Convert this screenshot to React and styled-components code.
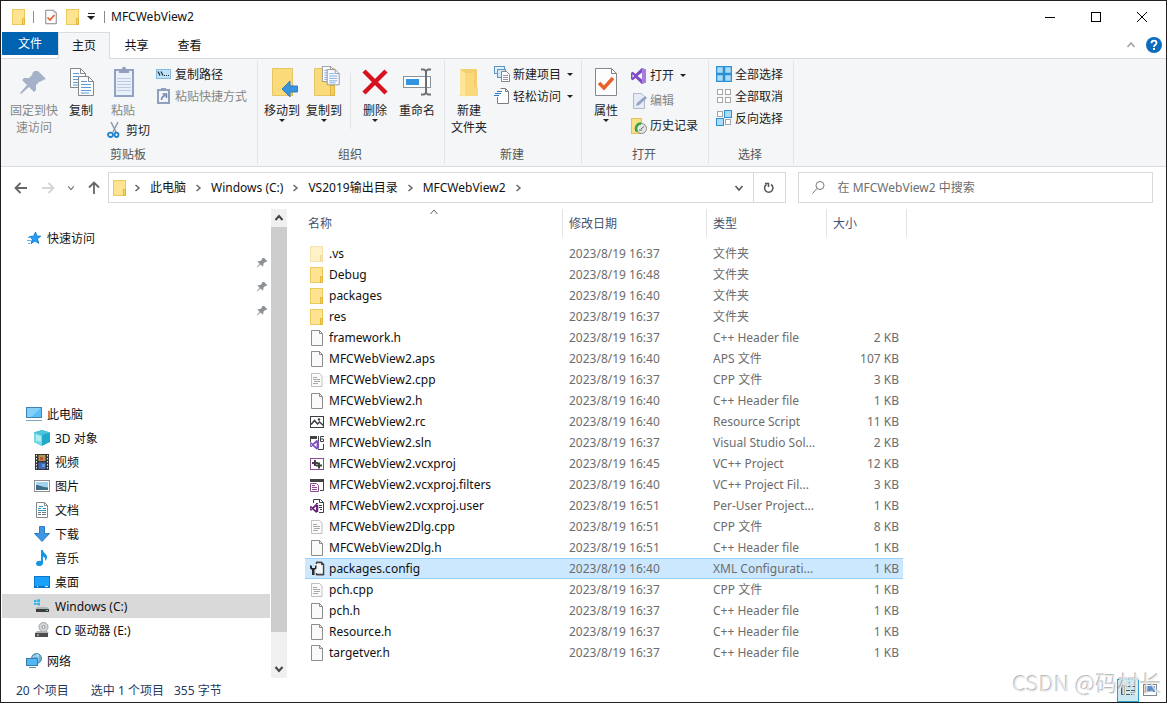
import React from "react";
import styled, { createGlobalStyle } from "styled-components";

const GlobalStyle = createGlobalStyle`
  * {
    box-sizing: border-box;
  }

  body {
    margin: 0;
    background: #fff;
    font-family: "Noto Sans", "Noto Sans CJK SC", sans-serif;
    font-size: 12px;
    line-height: 17px;
    color: #111;
  }

  button,
  input {
    margin: 0;
    padding: 0;
    border: 0;
    background: none;
    font: inherit;
    color: inherit;
  }

  ul {
    margin: 0;
    padding: 0;
    list-style: none;
  }
`;

const Window = styled.div`
  position: relative;
  display: flex;
  flex-direction: column;
  min-height: 100vh;
  border: 1px solid #231f20;
`;

const Icon = styled.svg`
  display: block;
  flex: none;
  width: ${(props) => props.$size || 16}px;
  height: ${(props) => props.$size || 16}px;
`;

/* ---------- icons ---------- */

function FolderIcon({ faded }) {
  return (
    <Icon viewBox="0 0 16 16" opacity={faded ? 0.5 : 1}>
      <rect x="1.5" y=".5" width="12" height="15" fill="#fee491" stroke="#ecc95e" />
      <path d="M11.5 15.5V9.5h2v6z" fill="#fbd65e" stroke="#dfb53c" />
    </Icon>
  );
}

function FileIcon() {
  return (
    <Icon viewBox="0 0 16 16">
      <path d="M2.5 .5h8l3 3v12h-11z" fill="#fafafa" stroke="#8d8d8d" />
      <path d="M10.5 .5v3h3" fill="none" stroke="#8d8d8d" />
    </Icon>
  );
}

function CodeIcon() {
  return (
    <Icon viewBox="0 0 16 16">
      <path d="M2.5 1.5h8l2.5 2.5v10.5H2.5z" fill="#fbfbfb" stroke="#c0c0c0" />
      <path d="M4 5.5h4M4 7.5h7M5 9.5h6M4 11.5h5" stroke="#a8a8a8" />
    </Icon>
  );
}

function ResourceIcon() {
  return (
    <Icon viewBox="0 0 16 16">
      <rect x="1.5" y="2.5" width="13" height="11" fill="#fff" stroke="#3e3e42" />
      <path d="M2 10.5l3.5-4 3 3.5 2-2 4 3.5" fill="none" stroke="#3e3e42" strokeWidth="1.5" />
      <circle cx="10" cy="5.5" r="1.2" fill="#3e3e42" />
    </Icon>
  );
}

function VsMark(props) {
  return (
    <g {...props}>
      <path
        fillRule="evenodd"
        d="M10.8 0L4.6 6 1.8 3.8 0 4.7v6.6l1.8.9L4.6 10l6.2 6L15 14.2V1.8zM11 4.5v7L6.5 8zM1.5 6.2L3.3 8 1.5 9.8z"
      />
    </g>
  );
}

function SolutionIcon() {
  return (
    <Icon viewBox="0 0 16 16">
      <path d="M1.5 7V1.5h6M14.5 9v5.5H9" fill="none" stroke="#424242" />
      <path d="M1 1h7v3H1z" fill="#424242" />
      <path d="M9.5 1v6M15 1.5h-3.5v5h3v-2.5h-3" fill="none" stroke="#424242" />
      <VsMark fill="#8052bc" transform="translate(1 5) scale(.6)" />
    </Icon>
  );
}

function ProjectIcon() {
  return (
    <Icon viewBox="0 0 16 16">
      <rect x="1.5" y="2.5" width="13" height="11" fill="#fff" stroke="#8d4b91" />
      <path d="M6 4v6M3 7h6M10 6.500v6M7 9.500h6" stroke="#424242" strokeWidth="2" />
    </Icon>
  );
}

function FiltersIcon() {
  return (
    <Icon viewBox="0 0 16 16">
      <path d="M1.5 4V2.500h13v11H11" fill="none" stroke="#424242" />
      <path d="M1 2h14v3H1z" fill="#424242" />
      <path d="M1.5 6.500h6l2 2v6h-8z" fill="#fff" stroke="#8d4b91" />
      <path d="M3 8.500h3M3 10.500h5M3 12.500h5" stroke="#8d4b91" />
    </Icon>
  );
}

function UserIcon() {
  return (
    <Icon viewBox="0 0 16 16">
      <path d="M4.5 5V1.500h7l3 3v10H10" fill="none" stroke="#424242" />
      <path d="M10.5 1.500v3h4" fill="none" stroke="#424242" />
      <path d="M7 5.500h2M10 7.500h3M10 9.500h3M11 11.500h2" stroke="#424242" />
      <VsMark fill="#68217a" transform="translate(1 6) scale(.55)" />
    </Icon>
  );
}

function ConfigIcon() {
  return (
    <Icon viewBox="0 0 16 16">
      <path d="M7.5 1.500h5l2 2v10h-7" fill="none" stroke="#424242" strokeWidth="1.300" />
      <path d="M7.5 1.500h5l2 2v10h-7z" fill="#f6f6f6" />
      <path d="M7.5 3V1.500h5l2 2v10h-7V12" fill="none" stroke="#424242" strokeWidth="1.300" />
      <path d="M12 1v3h3z" fill="#424242" />
      <path d="M1 4v3.500L3 9v5h2.500V9l2-1.500V4L6 5v2H3V5z" fill="#2c2c2c" />
    </Icon>
  );
}

function PinIcon({ size, color }) {
  return (
    <Icon $size={size} viewBox="0 0 32 32">
      <path
        d="M20 5l8 8-3 1-1 1-3 1-3 3 0 5-2 2-5-5-8 7-1-1 7-8-5-5 2-2 5 0 3-3 1-3 2-1z"
        fill={color}
      />
    </Icon>
  );
}

function PaperLines({ x, y }) {
  return (
    <g transform={`translate(${x} ${y})`}>
      <path d="M.5 .5h10l5 5v14H.5z" fill="#fbfcfe" stroke="#85878b" />
      <path d="M10.5 .5v5h5" fill="none" stroke="#85878b" />
      <path d="M3 5.500h6M3 8.500h10M3 11.500h10M3 14.500h10M3 17h8" stroke="#5e9ad8" />
    </g>
  );
}

function CopyIcon() {
  return (
    <Icon $size={32} viewBox="0 0 32 32">
      <PaperLines x={5} y={2} />
      <PaperLines x={13} y={10} />
    </Icon>
  );
}

function PasteIcon() {
  return (
    <Icon $size={32} viewBox="0 0 32 32">
      <rect x="8" y="4" width="18" height="26" fill="#eaf0fa" stroke="#8fa2c5" strokeWidth="2" />
      <path d="M10 12.500h14M10 15.500h14M10 18.500h14M10 21.500h14M10 24.500h14" stroke="#bccbe3" />
      <path d="M12 7V3h3c0-3 4-3 4 0h3v4z" fill="#93a0bb" />
    </Icon>
  );
}

function CutIcon() {
  return (
    <Icon viewBox="0 0 16 16">
      <path d="M4 0l5 10M11 0L6 10" stroke="#8d9aab" strokeWidth="1.500" />
      <ellipse cx="3.500" cy="12.800" rx="2.500" ry="2.200" fill="none" stroke="#1f7fc9" strokeWidth="1.800" />
      <ellipse cx="9.500" cy="12.800" rx="2" ry="2.200" fill="none" stroke="#1f7fc9" strokeWidth="1.800" />
    </Icon>
  );
}

function PathIcon() {
  return (
    <Icon viewBox="0 0 16 16">
      <rect x=".5" y="3.500" width="14" height="9" fill="#bfe2fb" stroke="#8ab9de" />
      <path d="M2 5.500l2 4M5 5.500l2 4M8 9.500h1M10 9.500h1M12 9.500h1" stroke="#1b2a3a" strokeWidth="1.200" />
    </Icon>
  );
}

function ShortcutIcon() {
  return (
    <Icon viewBox="0 0 16 16">
      <rect x="2" y="2" width="11" height="13" fill="#f3f5fa" stroke="#8fa0bd" strokeWidth="2" />
      <path d="M5 0h5v3H5z" fill="#8fa0bd" />
      <path d="M5.500 12c0-3 1-4 4-4.500M6.500 6h4v4" fill="none" stroke="#7486a8" strokeWidth="1.500" />
    </Icon>
  );
}

function BigFolder() {
  return (
    <>
      <path d="M6.500 2.500h20v27h-20z" fill="#fbdb79" stroke="#e6c566" />
      <path d="M22.500 29.500v-10h4v10z" fill="#f6cd59" stroke="#dcb447" />
    </>
  );
}

function MoveToIcon() {
  return (
    <Icon $size={32} viewBox="0 0 32 32">
      <BigFolder />
      <path d="M16 23l8-8v5h7.500v6H24v5z" fill="#3794dd" stroke="#2f7fc2" />
    </Icon>
  );
}

function CopyToIcon() {
  return (
    <Icon $size={32} viewBox="0 0 32 32">
      <BigFolder />
      <g transform="translate(14 0) scale(.8)">
        <PaperLines x={0} y={0} />
        <PaperLines x={6} y={4} />
      </g>
    </Icon>
  );
}

function DeleteIcon() {
  return (
    <Icon $size={32} viewBox="0 0 32 32">
      <path d="M5 5l22 22M27 5L5 27" stroke="#d8111f" strokeWidth="4.500" />
    </Icon>
  );
}

function RenameIcon() {
  return (
    <Icon $size={32} viewBox="0 0 32 32">
      <rect x="2.500" y="10.500" width="27" height="11" fill="#fff" stroke="#8b9299" />
      <rect x="5" y="13" width="13" height="6" fill="#3394e0" />
      <path d="M20 3.500h3l2 1.500 2-1.500h3M25 4.500v23M20 28.500h3l2-1.500 2 1.500h3" fill="none" stroke="#6b7076" strokeWidth="2" />
    </Icon>
  );
}

function NewFolderIcon() {
  return (
    <Icon $size={32} viewBox="0 0 32 32">
      <path d="M7 3h17v27H7z" fill="#f3cf70" />
      <path d="M7 3l5 4v24l-5-2z" fill="#fde59a" />
      <path d="M12 7h9v15l4-1v9H12z" fill="#fad97d" />
    </Icon>
  );
}

function NewItemIcon() {
  return (
    <Icon viewBox="0 0 16 16">
      <rect x=".5" y=".5" width="10" height="7" fill="#e1f1fc" stroke="#5c94bd" />
      <rect x="3.500" y="3.500" width="8" height="8" fill="#cfe8fa" stroke="#5c94bd" />
      <path d="M7.500 5.500h5l3 3v7h-8z" fill="#fff" stroke="#84878b" />
      <path d="M9 9.500h5M9 11.500h5M9 13.500h5" stroke="#9d8fa5" />
    </Icon>
  );
}

function EasyAccessIcon() {
  return (
    <Icon viewBox="0 0 16 16">
      <path d="M3.500 9v6.500h11V3.500l-3-3h-5" fill="#fff" stroke="#7b7d80" />
      <path d="M11.500 .5v3h3" fill="none" stroke="#7b7d80" />
      <path d="M3 3.500h5M1 5.500h6M0 7.500h5" stroke="#2b7bc0" />
    </Icon>
  );
}

function PropertiesIcon({ size }) {
  return (
    <Icon $size={size} viewBox="0 0 32 32">
      <path d="M5.500 2.500h16l5 5v22h-21z" fill="#fdfdfd" stroke="#84878b" strokeWidth={size ? 1 : 2} />
      <path d="M21.500 2.500v5h5" fill="none" stroke="#84878b" />
      <path d="M9 17l5 5 9-10" fill="none" stroke="#e8602c" strokeWidth="3.500" />
    </Icon>
  );
}

function OpenIcon() {
  return (
    <Icon viewBox="0 0 16 16">
      <VsMark fill="#7e4bc0" />
      <path d="M11 0l4 1.800v12.400L11 16z" fill="#a67ee0" />
    </Icon>
  );
}

function EditIcon() {
  return (
    <Icon viewBox="0 0 16 16">
      <path d="M2.500 .5h8l3 3v12h-11z" fill="#e6ebf6" stroke="#aeb9cf" />
      <path d="M5 13l1-3 8-7 2 2-8 7z" fill="#93a3c2" />
    </Icon>
  );
}

function HistoryIcon() {
  return (
    <Icon viewBox="0 0 16 16">
      <rect x=".5" y=".5" width="10" height="15" fill="#fbe08a" stroke="#e2c05a" />
      <circle cx="10.500" cy="10.500" r="5" fill="#e4e7e4" stroke="#878b88" />
      <path d="M10 5.500a5 5 0 0 0-4 8" fill="none" stroke="#37a344" strokeWidth="2.500" />
      <path d="M10 11l3-2.500M8 12h3" stroke="#6b6f6c" />
    </Icon>
  );
}

const squares = [
  [1, 1],
  [9, 1],
  [1, 9],
  [9, 9],
];

function SelectIcon({ filled }) {
  const full = filled.length === 4;
  return (
    <Icon viewBox="0 0 16 16">
      {squares.map(([x, y], index) => {
        const on = filled.includes(index);
        const side = on ? 7 : 5;
        return (
          <rect
            key={index}
            x={on ? x - 0.5 : x + 0.5}
            y={on ? y - 0.5 : y + 0.5}
            width={side}
            height={side}
            fill={on ? "#a9dcf8" : "#fff"}
            stroke={on ? "#2e8fd2" : "#a6a6a6"}
            strokeWidth={full ? 1.5 : 1}
          />
        );
      })}
    </Icon>
  );
}

function StarIcon() {
  return (
    <Icon viewBox="0 0 16 16">
      <path d="M9.500 2l1.200 4 4 .2-3.300 2.600 1.300 4.500-3.700-2.400-3.900 2.600 1.300-4.300L3.500 6.500l4.200-.3z" fill="#2a9df4" stroke="#1380d3" />
      <path d="M2 7.500h3M1 10.500h4M2 13.500h2" stroke="#5bb5f5" />
    </Icon>
  );
}

function ComputerIcon() {
  return (
    <Icon viewBox="0 0 16 16">
      <rect x=".5" y="1.500" width="15" height="10" fill="#5bbcf8" stroke="#4084b5" />
      <path d="M1 2h14L5 11H1z" fill="#85d0fb" />
      <path d="M0 14.500h16" stroke="#7ea4bf" />
    </Icon>
  );
}

function CubeIcon() {
  return (
    <Icon viewBox="0 0 16 16">
      <path d="M8 0l8 2.500v9.500l-8 4-8-4V2.500z" fill="#21a9c7" />
      <path d="M0 2.500L8 5v11l-8-4z" fill="#74dbe5" />
      <path d="M8 0l8 2.500L8 5 0 2.500z" fill="#4fc3d9" />
      <path d="M2 4.500l5 2v5l-5-1z" fill="#b5eef0" />
    </Icon>
  );
}

function VideoIcon() {
  return (
    <Icon viewBox="0 0 16 16">
      <path d="M1 0h14v16H1z" fill="#35363a" />
      <path d="M4.500 1h7v6h-7z" fill="#b09a3f" />
      <path d="M4.500 8.500h7v6.500h-7z" fill="#3f68b8" />
      <path d="M6 3h3v3H6z" fill="#c34a3e" />
      <path d="M8 10h3v3H8z" fill="#5b9be2" />
      <path d="M2.500 1v14M13.500 1v14" stroke="#e9e9e9" strokeDasharray="1.500 1.500" />
    </Icon>
  );
}

function PictureIcon() {
  return (
    <Icon viewBox="0 0 16 16">
      <rect x=".5" y="2.500" width="15" height="11" fill="#fff" stroke="#8c9093" />
      <path d="M2 4h12v8H2z" fill="#a4d3f2" />
      <path d="M2 7c3 0 6 2 12 2.500V12H2z" fill="#3f6d86" />
    </Icon>
  );
}

function DocumentIcon() {
  return (
    <Icon viewBox="0 0 16 16">
      <path d="M2.500 .5h8l3 3v12h-11z" fill="#fff" stroke="#84888c" />
      <path d="M10.500 .5v3h3" fill="none" stroke="#84888c" />
      <path d="M5 4.500h4M4 6.500h3M9 6.500h3M4 8.500h8" stroke="#2d9ccb" />
      <path d="M4 10.500h3M8 10.500h4M4 12.500h3M8 12.500h4" stroke="#6d7b85" />
    </Icon>
  );
}

function DownloadIcon() {
  return (
    <Icon viewBox="0 0 16 16">
      <path d="M5.500 .5h5v7h5L8 15.500.5 7.500h5z" fill="#3d97e3" stroke="#2f7cc1" />
    </Icon>
  );
}

function MusicIcon() {
  return (
    <Icon viewBox="0 0 16 16">
      <path d="M7 0h2c0 3 4 4 4 7 0 2-1 3-2 4 .5-3-.5-4-2-4.500V13c0 4-7 4-7 .5C2 11 5 10.500 7 11z" fill="#1595e6" />
    </Icon>
  );
}

function DesktopIcon() {
  return (
    <Icon viewBox="0 0 16 16">
      <rect x=".5" y="2.500" width="15" height="11" fill="#18a0fb" stroke="#1077c4" />
      <path d="M1 12.500h14" stroke="#0d6fb9" />
      <path d="M3 12.500h1M11 12.500h3" stroke="#d8efff" />
    </Icon>
  );
}

function DriveIcon() {
  return (
    <Icon viewBox="0 0 16 16">
      <path d="M0 2l2.500-.3V4H0zM3.200 1.600L6 1.200V4H3.200zM0 4.700h2.500V7L0 6.700zM3.200 4.700H6v2.800l-2.800-.4z" fill="#2bb3ee" />
      <path d="M3 9h10l2 2H1z" fill="#b2b4b6" />
      <path d="M2 11h13v3H2z" fill="#3c3e40" />
      <path d="M12 12.500h2" stroke="#61d66b" />
    </Icon>
  );
}

function DiscIcon() {
  return (
    <Icon viewBox="0 0 16 16">
      <circle cx="9.500" cy="5" r="4.500" fill="#d6d8d9" stroke="#9da0a3" />
      <circle cx="9.500" cy="5" r="1.500" fill="#fff" stroke="#8a8d90" />
      <path d="M3 9h10l2 2H1z" fill="#b2b4b6" />
      <path d="M1 11h13v4H1z" fill="#4b4d4f" />
      <path d="M3 13h2" stroke="#e1e1e1" />
    </Icon>
  );
}

function NetworkIcon() {
  return (
    <Icon viewBox="0 0 16 16">
      <circle cx="10.500" cy="5.500" r="5" fill="#6fb0d8" stroke="#4a88b3" />
      <path d="M7 4c2-2 4 0 6-2M11 1c2 3 1 6 0 9" fill="none" stroke="#cbe6f5" />
      <rect x=".5" y="5.500" width="11" height="7" fill="#52b7f5" stroke="#387ca9" />
      <path d="M3 14.500h7" stroke="#5791b4" />
    </Icon>
  );
}

function Chevron({ direction = "right", size = 10, color = "#666", weight = 1.5 }) {
  const paths = {
    right: "M3.500 2l3.500 3-3.500 3",
    down: "M1.500 3l3.500 4 3.500-4",
    up: "M1.500 7l3.500-4 3.500 4",
  };
  return (
    <Icon $size={size} viewBox="0 0 10 10">
      <path d={paths[direction]} fill="none" stroke={color} strokeWidth={weight} />
    </Icon>
  );
}

function ArrowIcon({ direction, color }) {
  const paths = {
    left: "M14 8H2.500M7.500 3l-5 5 5 5",
    right: "M2 8h11.500M8.500 3l5 5-5 5",
    up: "M8 14V2.500M3 7.500l5-5 5 5",
  };
  return (
    <Icon viewBox="0 0 16 16">
      <path d={paths[direction]} fill="none" stroke={color} strokeWidth="1.800" />
    </Icon>
  );
}

/* ---------- title bar and tabs ---------- */

const TitleBar = styled.header`
  display: flex;
  align-items: center;
  height: 31px;
  padding: 0 1px 0 10px;
`;

const QuickButton = styled.button`
  display: flex;
  padding: 0 3px;
`;

const QuickDivider = styled.span`
  width: 1px;
  height: 12px;
  margin: 0 6px;
  background: #8a8a8a;
`;

const Caret = styled.span`
  border: 3px solid transparent;
  border-top-color: #222;
  border-bottom-width: 0;
`;

const QuickCaret = styled(Caret)`
  display: block;
  border-width: 4px 4px 0;
`;

const CaretButton = styled.button`
  display: flex;
  flex-direction: column;
  align-items: center;
  gap: 2px;
  margin: 0 3px;

  &::before {
    content: "";
    width: 7px;
    height: 1px;
    background: #222;
  }
`;

const WindowTitle = styled.h1`
  flex: 1;
  margin: 0;
  font-size: 12px;
  font-weight: normal;
`;

const WindowButton = styled.button`
  display: flex;
  align-items: center;
  justify-content: center;
  width: 46px;
  height: 31px;
`;

const Tabs = styled.nav`
  display: flex;
  height: 27px;
  padding-left: 1px;
  border-bottom: 1px solid #dadbdc;
`;

const FileTab = styled.button`
  width: 56px;
  height: 23px;
  background: #0063b1;
  color: #fff;
`;

const Tab = styled.button`
  width: ${(props) => (props.$active ? 52 : 53)}px;
  height: 27px;
  padding-bottom: 2px;
  border: 1px solid ${(props) => (props.$active ? "#dadbdc" : "transparent")};
  border-bottom: 0;
  background: ${(props) => (props.$active ? "#f5f6f7" : "transparent")};
`;

const TabsEnd = styled.div`
  display: flex;
  align-items: center;
  gap: 10px;
  margin-left: auto;
  padding-right: 4px;
`;

const PlainButton = styled.button`
  display: flex;
  align-items: center;
`;

/* ---------- ribbon ---------- */

const Ribbon = styled.section`
  display: flex;
  min-height: 108px;
  padding: 2px 0;
  border-bottom: 1px solid #dadbdc;
  background: #f5f6f7;
`;

const Group = styled.div`
  display: flex;
  flex-direction: column;
  justify-content: space-between;
  width: ${(props) => props.$width}px;
  border-right: 1px solid #e2e3e4;
`;

const GroupBody = styled.div`
  display: flex;
  align-items: flex-start;
  padding-left: ${(props) => props.$indent || 3}px;
`;

const GroupLabel = styled.div`
  padding: 0 2px 1px 0;
  text-align: center;
  color: #555;
`;

const BigButton = styled.button`
  display: flex;
  flex-direction: column;
  align-items: center;
  width: ${(props) => (props.$wide ? 52 : 42)}px;
  padding-top: 5px;
  color: ${(props) => (props.disabled ? "#868686" : "#222")};
  white-space: nowrap;

  svg {
    margin-bottom: 4px;
  }
`;

const SmallButton = styled.button`
  display: flex;
  align-items: center;
  gap: 3px;
  height: ${(props) => (props.$tall ? 25 : 22)}px;
  padding: 0 2px;
  color: ${(props) => (props.disabled ? "#868686" : "#222")};
  white-space: nowrap;

  ${Caret} {
    margin-left: 3px;
  }
`;

const Stack = styled.div`
  display: flex;
  flex-direction: column;
  align-items: flex-start;
  margin-left: 2px;
  padding-top: 2px;
`;

const PasteStack = styled.div`
  width: 50px;

  ${SmallButton} {
    margin-left: 3px;
  }
`;

const InnerDivider = styled.div`
  width: 1px;
  height: 56px;
  margin: 12px 3px 0 5px;
  background: #e2e3e4;
`;

/* ---------- address row ---------- */

const AddressRow = styled.div`
  display: flex;
  align-items: center;
  gap: 12px;
  padding: 5px 13px 6px 12px;
`;

const NavButtons = styled.div`
  display: flex;
  align-items: center;
  gap: 11px;
  margin-right: -6px;
`;

const AddressBox = styled.div`
  display: flex;
  flex: 65;
  align-items: center;
  height: 31px;
  padding-left: 3px;
  border: 1px solid #d9d9d9;
`;

const AddressFolder = styled.span`
  padding-right: 4px;
`;

const Crumbs = styled.ol`
  display: flex;
  flex: 1;
  align-items: center;
  margin: 0;
  padding: 0;
  list-style: none;

  li {
    display: flex;
    align-items: center;
    gap: 7px;
    padding-left: 8px;
    white-space: nowrap;
  }
`;

const RefreshButton = styled.button`
  display: flex;
  align-items: center;
  justify-content: center;
  width: 32px;
  height: 29px;
  margin-left: 9px;
  border-left: 1px solid #d9d9d9;
`;

const SearchBox = styled.label`
  display: flex;
  flex: 33;
  align-items: center;
  gap: 12px;
  height: 31px;
  padding-left: 12px;
  border: 1px solid #d9d9d9;

  input {
    flex: 1;
    min-width: 0;
    outline: none;
  }

  input::placeholder {
    color: #6d6d6d;
    opacity: 1;
  }
`;

/* ---------- content ---------- */

const Content = styled.main`
  display: flex;
  flex: 1;
`;

const Sidebar = styled.nav`
  width: 269px;
  padding: 17px 0 4px 1px;
`;

const TreeItem = styled.li`
  display: flex;
  align-items: center;
  gap: 5px;
  height: 24px;
  padding-left: ${(props) => (props.$nested ? 32 : 24)}px;
  background: ${(props) => (props.$active ? "#d9d9d9" : "transparent")};

  a {
    color: inherit;
    text-decoration: none;
  }
`;

const PinnedItem = styled.li`
  display: flex;
  align-items: center;
  justify-content: flex-end;
  height: 24px;
  padding-right: 1px;
`;

const Tree = styled.ul`
  margin-bottom: ${(props) => props.$gap || 0}px;
`;

const Scrollbar = styled.div`
  display: flex;
  flex-direction: column;
  width: 16px;
  margin-left: 1px;
  background: #f0f0f0;
`;

const ScrollButton = styled.button`
  display: flex;
  align-items: center;
  justify-content: center;
  height: 18px;
`;

const ScrollThumb = styled.div`
  flex: 406;
  background: #cdcdcd;
`;

const ScrollSpace = styled.div`
  flex: 28;
`;

const FilePane = styled.section`
  flex: 1;
  padding-left: 18px;
`;

const FileTable = styled.table`
  width: 602px;
  table-layout: fixed;
  border-spacing: 0;
`;

const HeadCell = styled.th`
  position: relative;
  width: ${(props) => props.$width}px;
  height: 28px;
  padding: 0 0 0 ${(props) => (props.$first ? 3 : 6)}px;
  border-right: ${(props) => (props.$open ? "0" : "1px solid #e3e3e3")};
  font-weight: normal;
  text-align: left;
  color: #44546e;
`;

const HeadEnd = styled.td`
  width: 4px;
  padding: 0;
  border-right: 1px solid #e3e3e3;
`;

const SortMark = styled.span`
  position: absolute;
  top: -2px;
  left: 0;
  right: 0;
  display: flex;
  justify-content: center;
`;

const SpacerRow = styled.tr`
  height: 6px;
`;

const FileRow = styled.tr`
  td {
    height: 21px;
    padding: 0 0 0 6px;
    color: #6d6d6d;
    white-space: nowrap;
  }

  td:first-child {
    padding-left: 4px;
    color: #111;
  }

  td:nth-child(4) {
    padding-right: 4px;
    text-align: right;
  }

  td:last-child {
    padding: 0;
  }

  &[aria-selected="true"] td:not(:last-child) {
    background: #cce8ff;
    box-shadow: inset 0 1px #99d1ff, inset 0 -1px #99d1ff;
  }
`;

const FileName = styled.span`
  display: flex;
  align-items: center;
  gap: 4px;
`;

const StatusBar = styled.footer`
  display: flex;
  align-items: center;
  gap: 22px;
  height: 24px;
  padding: 0 5px 0 15px;
  color: #1f3a5f;
`;

const SelectionText = styled.span`
  display: flex;
  gap: 10px;
`;

const ViewButtons = styled.div`
  display: flex;
  margin-left: auto;
`;

const ViewButton = styled.button`
  display: flex;
  align-items: center;
  justify-content: center;
  width: 22px;
  height: 23px;
  border: 1px solid ${(props) => (props.$active ? "#2aa0c8" : "transparent")};
  background: ${(props) => (props.$active ? "#cbe8f3" : "transparent")};
`;

const Watermark = styled.div`
  position: absolute;
  right: 4px;
  bottom: 4px;
  font-family: "Noto Sans CJK SC", sans-serif;
  font-size: 22px;
  line-height: 32px;
  color: rgba(240, 240, 240, 0.8);
  text-shadow: -1px -1px 0 rgba(120, 120, 120, 0.5);
  pointer-events: none;
`;

/* ---------- data ---------- */

const crumbs = ["此电脑", "Windows (C:)", "VS2019输出目录", "MFCWebView2"];

const places = [
  { name: "3D 对象", icon: <CubeIcon /> },
  { name: "视频", icon: <VideoIcon /> },
  { name: "图片", icon: <PictureIcon /> },
  { name: "文档", icon: <DocumentIcon /> },
  { name: "下载", icon: <DownloadIcon /> },
  { name: "音乐", icon: <MusicIcon /> },
  { name: "桌面", icon: <DesktopIcon /> },
  { name: "Windows (C:)", icon: <DriveIcon />, active: true },
  { name: "CD 驱动器 (E:)", icon: <DiscIcon /> },
];

const files = [
  [<FolderIcon faded />, ".vs", "16:37", "文件夹", ""],
  [<FolderIcon />, "Debug", "16:48", "文件夹", ""],
  [<FolderIcon />, "packages", "16:40", "文件夹", ""],
  [<FolderIcon />, "res", "16:37", "文件夹", ""],
  [<FileIcon />, "framework.h", "16:37", "C++ Header file", "2 KB"],
  [<FileIcon />, "MFCWebView2.aps", "16:40", "APS 文件", "107 KB"],
  [<CodeIcon />, "MFCWebView2.cpp", "16:37", "CPP 文件", "3 KB"],
  [<FileIcon />, "MFCWebView2.h", "16:40", "C++ Header file", "1 KB"],
  [<ResourceIcon />, "MFCWebView2.rc", "16:40", "Resource Script", "11 KB"],
  [<SolutionIcon />, "MFCWebView2.sln", "16:37", "Visual Studio Sol...", "2 KB"],
  [<ProjectIcon />, "MFCWebView2.vcxproj", "16:45", "VC++ Project", "12 KB"],
  [<FiltersIcon />, "MFCWebView2.vcxproj.filters", "16:40", "VC++ Project Fil...", "3 KB"],
  [<UserIcon />, "MFCWebView2.vcxproj.user", "16:51", "Per-User Project...", "1 KB"],
  [<CodeIcon />, "MFCWebView2Dlg.cpp", "16:51", "CPP 文件", "8 KB"],
  [<FileIcon />, "MFCWebView2Dlg.h", "16:51", "C++ Header file", "1 KB"],
  [<ConfigIcon />, "packages.config", "16:40", "XML Configurati...", "1 KB"],
  [<CodeIcon />, "pch.cpp", "16:37", "CPP 文件", "1 KB"],
  [<FileIcon />, "pch.h", "16:37", "C++ Header file", "1 KB"],
  [<FileIcon />, "Resource.h", "16:37", "C++ Header file", "1 KB"],
  [<FileIcon />, "targetver.h", "16:37", "C++ Header file", "1 KB"],
];

/* ---------- parts ---------- */

function TopBar() {
  return (
    <TitleBar>
      <FolderIcon />
      <QuickDivider />
      <QuickButton aria-label="属性">
        <PropertiesIcon />
      </QuickButton>
      <QuickButton aria-label="新建文件夹">
        <FolderIcon />
      </QuickButton>
      <CaretButton aria-label="自定义快速访问工具栏">
        <QuickCaret />
      </CaretButton>
      <QuickDivider />
      <WindowTitle>MFCWebView2</WindowTitle>
      <WindowButton aria-label="最小化">
        <Icon $size={10} viewBox="0 0 10 10">
          <path d="M0 5.500h10" stroke="#000" />
        </Icon>
      </WindowButton>
      <WindowButton aria-label="最大化">
        <Icon $size={10} viewBox="0 0 10 10">
          <rect x=".5" y=".5" width="9" height="9" fill="none" stroke="#000" />
        </Icon>
      </WindowButton>
      <WindowButton aria-label="关闭">
        <Icon $size={10} viewBox="0 0 10 10">
          <path d="M0 0l10 10M10 0L0 10" stroke="#000" />
        </Icon>
      </WindowButton>
    </TitleBar>
  );
}

function RibbonTabs() {
  return (
    <Tabs>
      <FileTab>文件</FileTab>
      <Tab $active>主页</Tab>
      <Tab>共享</Tab>
      <Tab>查看</Tab>
      <TabsEnd>
        <PlainButton aria-label="最小化功能区">
          <Chevron direction="up" color="#a0a0a0" />
        </PlainButton>
        <PlainButton aria-label="帮助">
          <Icon viewBox="0 0 16 16">
            <circle cx="8" cy="8" r="8" fill="#0f6cbd" />
            <path d="M5.500 6.200C5.500 2.800 10.500 3 10.500 6c0 1.800-2.500 1.800-2.500 4" fill="none" stroke="#fff" strokeWidth="1.800" />
            <path d="M7 11h2v2H7z" fill="#fff" />
          </Icon>
        </PlainButton>
      </TabsEnd>
    </Tabs>
  );
}

function RibbonPanel() {
  return (
    <Ribbon>
      <Group $width={257}>
        <GroupBody $indent={7}>
          <BigButton $wide disabled>
            <PinIcon size={32} color="#a5b1c9" />
            <span>固定到快</span>
            <span>速访问</span>
          </BigButton>
          <BigButton>
            <CopyIcon />
            <span>复制</span>
          </BigButton>
          <PasteStack>
            <BigButton disabled>
              <PasteIcon />
              <span>粘贴</span>
            </BigButton>
            <SmallButton>
              <CutIcon />
              剪切
            </SmallButton>
          </PasteStack>
          <Stack>
            <SmallButton>
              <PathIcon />
              复制路径
            </SmallButton>
            <SmallButton disabled>
              <ShortcutIcon />
              粘贴快捷方式
            </SmallButton>
          </Stack>
        </GroupBody>
        <GroupLabel>剪贴板</GroupLabel>
      </Group>

      <Group $width={187}>
        <GroupBody>
          <BigButton>
            <MoveToIcon />
            <span>移动到</span>
            <Caret />
          </BigButton>
          <BigButton>
            <CopyToIcon />
            <span>复制到</span>
            <Caret />
          </BigButton>
          <InnerDivider />
          <BigButton>
            <DeleteIcon />
            <span>删除</span>
            <Caret />
          </BigButton>
          <BigButton>
            <RenameIcon />
            <span>重命名</span>
          </BigButton>
        </GroupBody>
        <GroupLabel>组织</GroupLabel>
      </Group>

      <Group $width={137}>
        <GroupBody>
          <BigButton>
            <NewFolderIcon />
            <span>新建</span>
            <span>文件夹</span>
          </BigButton>
          <Stack>
            <SmallButton>
              <NewItemIcon />
              新建项目
              <Caret />
            </SmallButton>
            <SmallButton>
              <EasyAccessIcon />
              轻松访问
              <Caret />
            </SmallButton>
          </Stack>
        </GroupBody>
        <GroupLabel>新建</GroupLabel>
      </Group>

      <Group $width={127}>
        <GroupBody>
          <BigButton>
            <PropertiesIcon size={32} />
            <span>属性</span>
            <Caret />
          </BigButton>
          <Stack>
            <SmallButton $tall>
              <OpenIcon />
              打开
              <Caret />
            </SmallButton>
            <SmallButton $tall disabled>
              <EditIcon />
              编辑
            </SmallButton>
            <SmallButton $tall>
              <HistoryIcon />
              历史记录
            </SmallButton>
          </Stack>
        </GroupBody>
        <GroupLabel>打开</GroupLabel>
      </Group>

      <Group $width={85}>
        <GroupBody>
          <Stack>
            <SmallButton>
              <SelectIcon filled={[0, 1, 2, 3]} />
              全部选择
            </SmallButton>
            <SmallButton>
              <SelectIcon filled={[]} />
              全部取消
            </SmallButton>
            <SmallButton>
              <SelectIcon filled={[1, 2]} />
              反向选择
            </SmallButton>
          </Stack>
        </GroupBody>
        <GroupLabel>选择</GroupLabel>
      </Group>
    </Ribbon>
  );
}

function Address() {
  return (
    <AddressRow>
      <NavButtons>
        <PlainButton aria-label="后退">
          <ArrowIcon direction="left" color="#666" />
        </PlainButton>
        <PlainButton aria-label="前进">
          <ArrowIcon direction="right" color="#d5d5d5" />
        </PlainButton>
        <PlainButton aria-label="最近位置">
          <Chevron direction="down" size={8} color="#777" />
        </PlainButton>
        <PlainButton aria-label="上移">
          <ArrowIcon direction="up" color="#666" />
        </PlainButton>
      </NavButtons>
      <AddressBox>
        <AddressFolder>
          <FolderIcon />
        </AddressFolder>
        <Chevron />
        <Crumbs>
          {crumbs.map((crumb) => (
            <li key={crumb}>
              <button>{crumb}</button>
              <Chevron />
            </li>
          ))}
        </Crumbs>
        <PlainButton aria-label="以前的位置">
          <Chevron direction="down" color="#555" />
        </PlainButton>
        <RefreshButton aria-label="刷新">
          <Icon $size={14} viewBox="0 0 14 14">
            <path d="M9 3.500A4.200 4.200 0 1 1 4.500 3.500" fill="none" stroke="#555" strokeWidth="1.500" />
            <path d="M3 2.500h3.500V6" fill="none" stroke="#555" strokeWidth="1.500" />
          </Icon>
        </RefreshButton>
      </AddressBox>
      <SearchBox>
        <Icon $size={15} viewBox="0 0 15 15">
          <circle cx="9" cy="5.500" r="4" fill="none" stroke="#777" />
          <path d="M6 8.500L1.500 13.500" stroke="#777" />
        </Icon>
        <input type="text" placeholder="在 MFCWebView2 中搜索" />
      </SearchBox>
    </AddressRow>
  );
}

function NavigationTree() {
  return (
    <Sidebar>
      <Tree $gap={80}>
        <TreeItem>
          <StarIcon />
          <a href="#quick">快速访问</a>
        </TreeItem>
        {[1, 2, 3].map((pin) => (
          <PinnedItem key={pin}>
            <PinIcon size={13} color="#8c9196" />
          </PinnedItem>
        ))}
      </Tree>
      <Tree $gap={7}>
        <TreeItem>
          <ComputerIcon />
          <a href="#computer">此电脑</a>
        </TreeItem>
        {places.map((place) => (
          <TreeItem key={place.name} $nested $active={place.active}>
            {place.icon}
            <a href="#place">{place.name}</a>
          </TreeItem>
        ))}
      </Tree>
      <Tree>
        <TreeItem>
          <NetworkIcon />
          <a href="#network">网络</a>
        </TreeItem>
      </Tree>
    </Sidebar>
  );
}

function FileList() {
  return (
    <FilePane>
      <FileTable>
        <thead>
          <tr>
            <HeadCell $width={258} $first>
              名称
              <SortMark>
                <Chevron direction="up" weight={1} />
              </SortMark>
            </HeadCell>
            <HeadCell $width={144}>修改日期</HeadCell>
            <HeadCell $width={120}>类型</HeadCell>
            <HeadCell $width={76} $open>
              大小
            </HeadCell>
            <HeadEnd />
          </tr>
        </thead>
        <tbody>
          <SpacerRow />
          {files.map(([icon, name, time, type, size]) => (
            <FileRow key={name} aria-selected={name === "packages.config"}>
              <td>
                <FileName>
                  {icon}
                  {name}
                </FileName>
              </td>
              <td>2023/8/19 {time}</td>
              <td>{type}</td>
              <td>{size}</td>
              <td />
            </FileRow>
          ))}
        </tbody>
      </FileTable>
    </FilePane>
  );
}

function App() {
  return (
    <>
      <GlobalStyle />
      <Window>
        <TopBar />
        <RibbonTabs />
        <RibbonPanel />
        <Address />
        <Content>
          <NavigationTree />
          <Scrollbar>
            <ScrollButton aria-label="向上滚动">
              <Chevron direction="up" color="#444" weight={2} />
            </ScrollButton>
            <ScrollThumb />
            <ScrollSpace />
            <ScrollButton aria-label="向下滚动">
              <Chevron direction="down" color="#444" weight={2} />
            </ScrollButton>
          </Scrollbar>
          <FileList />
        </Content>
        <StatusBar>
          <span>20 个项目</span>
          <SelectionText>
            <span>选中 1 个项目</span>
            <span>355 字节</span>
          </SelectionText>
          <ViewButtons>
            <ViewButton $active aria-label="详细信息">
              <Icon viewBox="0 0 16 16">
                <path d="M1.500 3.500h3v9h-3zM6 4.500h4M11 4.500h4M6 8.500h4M11 8.500h4M6 12.500h4M11 12.500h4" fill="none" stroke="#4a5a66" />
              </Icon>
            </ViewButton>
            <ViewButton aria-label="大图标">
              <Icon viewBox="0 0 16 16">
                <rect x="1.500" y="2.500" width="13" height="11" fill="#fff" stroke="#7d8a94" />
                <path d="M3 4h10v6H3z" fill="#5b8fd0" />
              </Icon>
            </ViewButton>
          </ViewButtons>
        </StatusBar>
        <Watermark>CSDN @码村长</Watermark>
      </Window>
    </>
  );
}

export default App;
